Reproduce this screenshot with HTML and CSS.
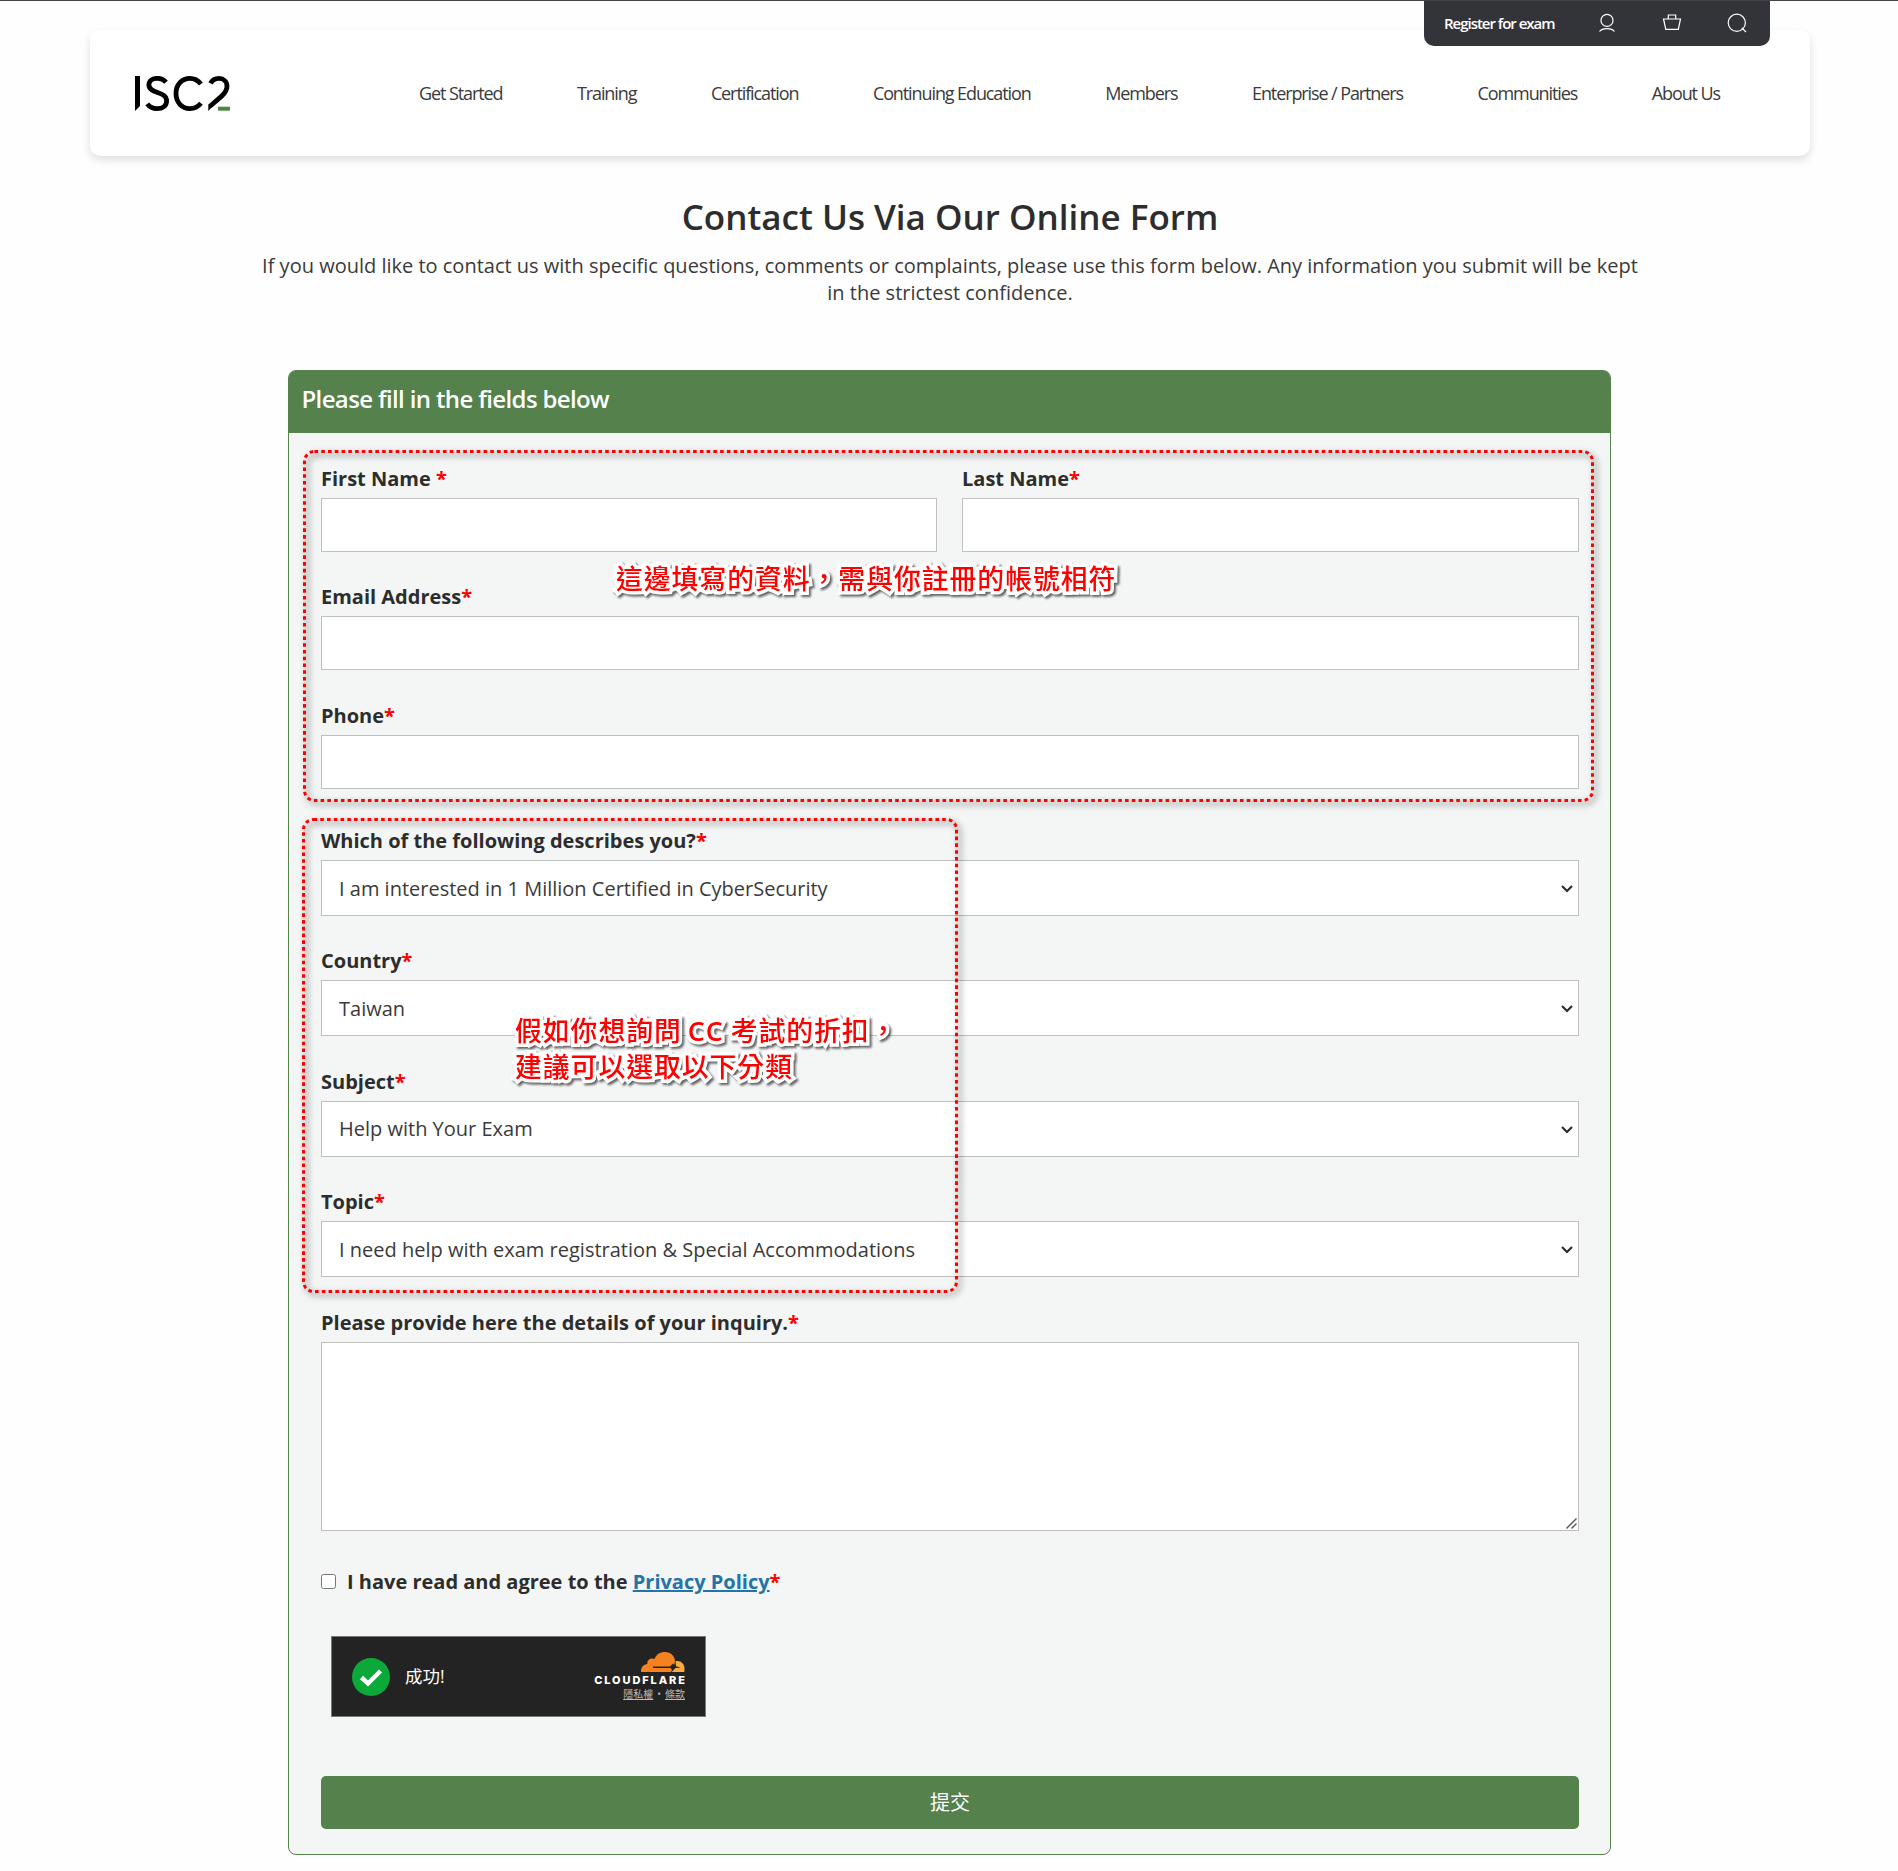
FILE: index.html
```html
<!DOCTYPE html>
<html lang="en">
<head>
<meta charset="utf-8">
<title>Contact Us</title>
<link rel="stylesheet" href="styles.css">
</head>
<body>
<header class="site-header">
  <svg class="logo" viewBox="0 0 96 36" role="img" aria-label="ISC2">
    <path d="M0 0H5V30L0 35Z"/>
    <g class="logo-stroke">
      <path d="M31 6.3C28.5 3.3 25.5 2.3 22.3 2.3C17.400 2.300 13.900 4.800 13.900 8.800C13.900 18.500 31.600 14.600 31.600 25C31.600 29.700 27.700 32.700 22 32.700C17.800 32.700 14.500 31 12.300 27.900"/>
      <path d="M65.900 8C63 4.400 59.400 2.400 55 2.400C46.800 2.400 41 8.900 41 17.500C41 26.100 46.800 32.600 55 32.600C59.400 32.600 63 30.700 66 27.200"/>
      <path d="M75.500 7.400C77.200 4.200 80 2.400 84 2.400C88.700 2.400 92 5.600 92 10.300C92 14.800 89.600 17.600 86.400 20.400L75 30.300"/>
    </g>
    <path d="M73.300 28.500L80 27.800L73.300 35Z"/>
    <path class="logo-dash" d="M83 30.700H95V34.700H83Z"/>
  </svg>
  <nav class="main-nav">
    <a>Get Started</a><a>Training</a><a>Certification</a><a>Continuing Education</a><a>Members</a><a>Enterprise / Partners</a><a>Communities</a><a>About Us</a>
  </nav>
  <div class="utility-bar">
    <a class="register">Register for exam</a>
    <svg class="util-icon" viewBox="0 0 20 20"><circle cx="10" cy="7.400" r="6"/><path d="M2.500 18.500C5.500 14.600 14.500 14.600 17.500 18.500"/></svg>
    <svg class="util-icon" viewBox="0 0 20 20"><path d="M1.500 6H18.500L16.300 16.300H3.800ZM6.300 6V2H13.700V6"/></svg>
    <svg class="util-icon" viewBox="0 0 20 20"><circle cx="9.800" cy="9.800" r="8.600"/><path d="M14.800 14.800L19 19"/></svg>
  </div>
</header>
<main class="content">
  <h1 class="page-title">Contact Us Via Our Online Form</h1>
  <p class="intro">If you would like to contact us with specific questions, comments or complaints, please use this form below. Any information you submit will be kept in the strictest confidence.</p>
  <form class="form-card">
    <h2 class="form-title">Please fill in the fields below</h2>
    <div class="form-body">
      <div class="row">
        <div class="field"><label>First Name <i>*</i></label><input type="text"></div>
        <div class="field"><label>Last Name<i>*</i></label><input type="text"></div>
      </div>
      <div class="field"><label>Email Address<i>*</i></label><input type="text"></div>
      <div class="field"><label>Phone<i>*</i></label><input type="text"></div>
      <div class="field choice-start"><label>Which of the following describes you?<i>*</i></label>
        <div class="control"><select><option>I am interested in 1 Million Certified in CyberSecurity</option></select><svg class="chevron" viewBox="0 0 12 8"><path d="M1 1L6 6L11 1"/></svg></div></div>
      <div class="field"><label>Country<i>*</i></label>
        <div class="control"><select><option>Taiwan</option></select><svg class="chevron" viewBox="0 0 12 8"><path d="M1 1L6 6L11 1"/></svg></div></div>
      <div class="field"><label>Subject<i>*</i></label>
        <div class="control"><select><option>Help with Your Exam</option></select><svg class="chevron" viewBox="0 0 12 8"><path d="M1 1L6 6L11 1"/></svg></div></div>
      <div class="field"><label>Topic<i>*</i></label>
        <div class="control"><select><option>I need help with exam registration &amp; Special Accommodations</option></select><svg class="chevron" viewBox="0 0 12 8"><path d="M1 1L6 6L11 1"/></svg></div></div>
      <div class="field"><label>Please provide here the details of your inquiry.<i>*</i></label>
        <div class="control"><textarea></textarea><svg class="resizer" viewBox="0 0 11 11"><path d="M.5 10.500L10.500 .5M5.500 10.500L10.500 5.500"/></svg></div></div>
      <label class="agree"><input type="checkbox"><span>I have read and agree to the <a>Privacy Policy</a><i>*</i></span></label>
      <div class="turnstile">
        <svg class="success" viewBox="0 0 38 38"><circle cx="19" cy="19" r="19"/><path d="M9.500 19.500L16 25.500L28.500 13"/></svg>
        <span class="success-text">成功!</span>
        <div class="brand">
          <svg class="cloud" viewBox="0 0 44 20"><path class="cloud-main" d="M0 20C-.3 15.500 2.500 12.300 6.400 12C5.500 8.500 9.500 5 13.400 7C15.300 2.500 19 0 24 0C30 0 34.300 4.500 34 10L32 16L30 20Z"/><path class="cloud-side" d="M31 20C31.800 17.500 33 16.500 35 16L39.500 15.200L35 14.400L34.500 9.200C40 8.500 43.700 12 43.500 17L43.300 20Z"/><path class="cloud-line" d="M12 14.400H29L32 11.500L34 14.400L39.500 15.200L34 16L32 19L29.500 16H12Z"/></svg>
          <span class="brand-name">CLOUDFLARE</span>
          <span class="brand-links"><a>隱私權</a><b>•</b><a>條款</a></span>
        </div>
      </div>
      <button class="submit" type="button">提交</button>
    </div>
    <svg class="mark mark-personal" viewBox="0 0 1291 352"><rect x="1.500" y="1.500" width="1288" height="349" rx="10"/></svg>
    <svg class="mark mark-topic" viewBox="0 0 656 475"><rect x="1.500" y="1.500" width="653" height="472" rx="10"/></svg>
    <p class="note note-personal">這邊填寫的資料，需與你註冊的帳號相符</p>
    <p class="note note-topic">假如你想詢問 <b>CC</b> 考試的折扣，<br>建議可以選取以下分類</p>
  </form>
</main>
</body>
</html>
```
FILE: styles.css
```css
* { box-sizing: border-box; }

body {
  margin: 0;
  min-height: 1871px;
  border-top: 1px solid #444446;
  background: #fefefe;
  color: #2d2d2d;
  font-family: "Open Sans", "Noto Sans CJK TC", sans-serif;
  font-size: 20px;
  line-height: 27px;
}

/* Header */
.site-header {
  position: relative;
  display: flex;
  align-items: center;
  justify-content: space-between;
  width: 1720px;
  height: 126px;
  margin: 29px 88px 0 90px;
  padding: 0 90px 0 45px;
  border-radius: 10px;
  background: #fff;
  box-shadow: 0 4px 8px rgba(0, 0, 0, .13);
}
.logo { width: 96px; height: 36px; margin-top: 2px; }
.logo-stroke { fill: none; stroke: #000; stroke-width: 4.800; }
.logo-dash { fill: #4b8748; }
.main-nav { display: flex; gap: 74.500px; font-size: 18px; letter-spacing: -1.100px; color: #3a3a3a; }
.utility-bar {
  position: absolute;
  top: -29px;
  right: 40px;
  display: flex;
  align-items: center;
  justify-content: space-between;
  width: 346px;
  height: 45px;
  padding: 0 23px 0 20px;
  border-radius: 0 0 10px 10px;
  background: #333439;
  color: #fff;
}
.register { margin-right: -2px; font-size: 15px; font-weight: 600; letter-spacing: -1.020px; }
.util-icon { width: 20px; height: 20px; margin-top: -1px; fill: none; stroke: #fff; stroke-width: 1.200; }

/* Intro */
.content { width: 1400px; margin: 0 0 0 250px; text-align: center; }
.page-title { margin: 36px 0 0; font-size: 35px; font-weight: 600; line-height: 50px; }
.intro { margin: 10px 0 0; padding: 0 10px; color: #3a3a3a; }

/* Form */
.form-card {
  position: relative;
  width: 1323px;
  margin: 64px 0 0 38px;
  border: 1px solid #54814c;
  border-radius: 8px;
  background: #f4f6f5;
  text-align: left;
}
.form-title {
  height: 62px;
  margin: 0;
  padding: 14px 12.500px;
  border-radius: 6px 6px 0 0;
  background: #54814c;
  color: #fff;
  font-size: 24px;
  font-weight: 600;
  letter-spacing: -.640px;
}
.form-body { display: flex; flex-direction: column; gap: 31.420px; padding: 32px 31px 25px 32px; }
.row { display: grid; grid-template-columns: 616px 1fr; gap: 25px; }
.field { display: flex; flex-direction: column; gap: 6px; }
.choice-start { margin-top: 6.800px; }
label { font-weight: 700; }
label i { color: #f00; font-style: normal; }
.field input, select, textarea {
  display: block;
  width: 100%;
  margin: 0;
  border: 1px solid #bfbfbf;
  border-radius: 0;
  background: #fff;
  color: #3a3a3a;
  font: inherit;
}
.field input { height: 54px; }
.control { position: relative; }
select { height: 56px; padding: 0 0 0 17px; appearance: none; }
textarea { height: 189px; resize: none; }
.chevron { position: absolute; right: 6px; top: 25px; width: 12px; height: 8px; fill: none; stroke: #2d2d2d; stroke-width: 2.200; }
.resizer { position: absolute; right: 2px; bottom: 2px; width: 11px; height: 11px; fill: none; stroke: #555; stroke-width: 1.400; }
.agree { display: flex; align-items: center; gap: 11px; margin-top: 6px; }
.agree input { width: 15px; height: 15px; margin: 0; }
.agree a { color: #2374a8; text-decoration: underline; }

/* Verification widget */
.turnstile {
  display: flex;
  align-items: center;
  width: 375px;
  height: 81px;
  margin: 9.800px 0 27.600px 10px;
  padding: 0 20px;
  border: 1px solid #797979;
  background: #232323;
  color: #fff;
}
.success { width: 38px; height: 38px; }
.success circle { fill: #0aa939; }
.success path { fill: none; stroke: #fff; stroke-width: 4.500; }
.success-text { margin-left: 15px; font-size: 17.500px; }
.brand { display: flex; flex-direction: column; align-items: flex-end; margin-left: auto; }
.cloud { width: 44px; height: 20px; }
.cloud-main { fill: #f6821f; }
.cloud-side { fill: #fbad41; }
.cloud-line { fill: #232323; }
.brand-name { margin: 2px -1.900px 0 0; font: 800 11px/12px Inter, sans-serif; letter-spacing: 1.900px; }
.brand-links { display: flex; gap: 4px; font-size: 10px; line-height: 16px; color: #bbb; }
.brand-links a { text-decoration: underline; }
.brand-links b { font-weight: 400; }

.submit {
  height: 53px;
  border: 0;
  border-radius: 5px;
  background: #54814c;
  color: #fff;
  font: inherit;
}

/* Annotations over the form */
.mark {
  position: absolute;
  overflow: visible;
  fill: none;
  stroke: #f00;
  stroke-width: 3;
  stroke-dasharray: 3.600 3.160;
  filter: drop-shadow(3px 3px 3px rgba(0, 0, 0, .65));
  pointer-events: none;
}
.mark-personal { left: 14px; top: 79px; width: 1291px; height: 352px; }
.mark-topic { left: 13px; top: 447px; width: 656px; height: 475px; }
.note {
  position: absolute;
  margin: 0;
  color: #f00;
  font-size: 26.800px;
  letter-spacing: 1px;
  font-weight: 500;
  line-height: 35.500px;
  white-space: nowrap;
  -webkit-text-stroke: 7px #fff;
  paint-order: stroke fill;
  filter: drop-shadow(2px 2px 1px rgba(0, 0, 0, .6));
}
.note b { margin: 0 -1px 0 -2px; font-weight: 600; }
.note-personal { left: 327px; top: 190px; }
.note-topic { left: 226px; top: 642px; }
```
